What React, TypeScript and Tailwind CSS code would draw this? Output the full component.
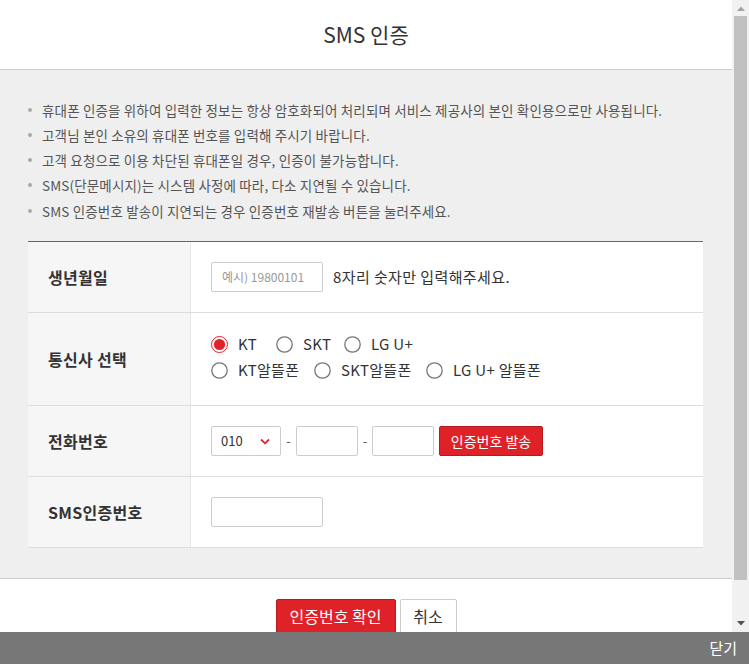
import React from "react";

function Radio({ checked, label, w }: { checked?: boolean; label: string; w: string }) {
  return (
    <label className={`flex items-center ${w}`}>
      <svg width="17" height="17" viewBox="0 0 17 17" className="shrink-0">
        {checked ? (
          <>
            <circle cx="8.5" cy="8.5" r="8" fill="#fff" stroke="#e0232a" strokeWidth="1" />
            <circle cx="8.5" cy="8.5" r="5.6" fill="#e0232a" />
          </>
        ) : (
          <circle cx="8.5" cy="8.5" r="7.7" fill="#fff" stroke="#767676" strokeWidth="1.3" />
        )}
      </svg>
      <span className="ml-[10px] text-[15px] leading-[20px] tracking-[0.3px] text-[#333] whitespace-nowrap">{label}</span>
    </label>
  );
}

function Row({ label, h, children }: { label: string; h: string; children: React.ReactNode }) {
  return (
    <div className={`flex border-b border-[#dddddd] ${h}`}>
      <div className="w-[163px] shrink-0 bg-[#f6f6f6] border-r border-[#e6e6e6] pl-[20px] flex items-center text-[16px] tracking-[0.3px] font-bold text-[#333]">
        {label}
      </div>
      <div className="flex-1 bg-white pl-[20px] flex items-center">{children}</div>
    </div>
  );
}

const bullets = [
  "휴대폰 인증을 위하여 입력한 정보는 항상 암호화되어 처리되며 서비스 제공사의 본인 확인용으로만 사용됩니다.",
  "고객님 본인 소유의 휴대폰 번호를 입력해 주시기 바랍니다.",
  "고객 요청으로 이용 차단된 휴대폰일 경우, 인증이 불가능합니다.",
  "SMS(단문메시지)는 시스템 사정에 따라, 다소 지연될 수 있습니다.",
  "SMS 인증번호 발송이 지연되는 경우 인증번호 재발송 버튼을 눌러주세요.",
];

export default function App() {
  return (
    <div className="w-[749px] h-[664px] flex flex-col overflow-hidden bg-white font-['Noto_Sans_CJK_KR',sans-serif]">
      <div className="flex h-[632px]">
        <div className="w-[732px] flex flex-col overflow-hidden">
          <div className="h-[70px] shrink-0 border-b border-[#cccccc] flex items-center justify-center text-[21px] text-[#333]">
            SMS 인증
          </div>
          <div className="bg-[#efefef] pt-[27px] pb-[30px] border-b border-[#cccccc] shrink-0">
            <ul className="h-[126px] pl-[28px]">
              {bullets.map((b) => (
                <li key={b} className="flex items-center h-[25.25px]">
                  <span className="w-[4px] h-[4px] rounded-full bg-[#a9a9a9] shrink-0" />
                  <span className="ml-[10px] text-[13.5px] text-[#555] tracking-[0.15px] whitespace-nowrap">{b}</span>
                </li>
              ))}
            </ul>
            <div className="mt-[18px] mx-[28px] w-[675px] border-t border-[#666]">
              <Row label="생년월일" h="h-[71px]">
                <div className="w-[112px] h-[30px] border border-[#ccc] rounded-[2px] flex items-center pl-[10px] text-[12px] text-[#999]">
                  예시) 19800101
                </div>
                <span className="ml-[10px] text-[15px] tracking-[0.4px] text-[#333]">8자리 숫자만 입력해주세요.</span>
              </Row>
              <Row label="통신사 선택" h="h-[93px]">
                <div className="flex flex-col gap-[6px] pb-[4px]">
                  <div className="flex">
                    <Radio checked label="KT" w="w-[65px]" />
                    <Radio label="SKT" w="w-[68px]" />
                    <Radio label="LG U+" w="w-[100px]" />
                  </div>
                  <div className="flex">
                    <Radio label="KT알뜰폰" w="w-[103px]" />
                    <Radio label="SKT알뜰폰" w="w-[112px]" />
                    <Radio label="LG U+ 알뜰폰" w="w-[130px]" />
                  </div>
                </div>
              </Row>
              <Row label="전화번호" h="h-[71px]">
                <div className="w-[70px] h-[30px] border border-[#ccc] rounded-[2px] flex items-center justify-between pl-[9px] pr-[10px] text-[13px] text-[#333]">
                  <span>010</span>
                  <svg width="10" height="7" viewBox="0 0 10 7">
                    <path d="M1 1.5 L5 5.3 L9 1.5" fill="none" stroke="#e0232a" strokeWidth="1.8" />
                  </svg>
                </div>
                <span className="w-[15px] text-center text-[13px] text-[#555]">-</span>
                <div className="w-[62px] h-[30px] border border-[#ccc] rounded-[2px]" />
                <span className="w-[14px] text-center text-[13px] text-[#555]">-</span>
                <div className="w-[62px] h-[30px] border border-[#ccc] rounded-[2px]" />
                <button className="ml-[5px] w-[104px] h-[30px] bg-[#df2128] border border-[#b51a20] rounded-[2px] text-white text-[14px] flex items-center justify-center">
                  인증번호 발송
                </button>
              </Row>
              <Row label="SMS인증번호" h="h-[71px]">
                <div className="w-[112px] h-[30px] border border-[#ccc] rounded-[2px]" />
              </Row>
            </div>
          </div>
          <div className="flex justify-center gap-[4px] pt-[20px]">
            <button className="w-[120px] h-[36px] shrink-0 bg-[#df2128] border border-[#b51a20] rounded-[2px] text-white text-[16px] flex items-start justify-center pt-[4px]">
              인증번호 확인
            </button>
            <button className="w-[57px] h-[36px] shrink-0 bg-white border border-[#ccc] rounded-[2px] text-[#333] text-[16px] flex items-start justify-center pt-[4px]">
              취소
            </button>
          </div>
        </div>
        <div className="w-[17px] bg-[#f1f1f1] flex flex-col items-center">
          <div className="h-[16px] w-full flex items-center justify-center">
            <svg width="8" height="5" viewBox="0 0 8 5">
              <path d="M0 5 L4 0.5 L8 5 Z" fill="#a3a3a3" />
            </svg>
          </div>
          <div className="w-[13px] h-[564px] bg-[#c1c1c1]" />
          <div className="flex-1" />
          <div className="h-[17px] w-full flex items-center justify-center">
            <svg width="8" height="5" viewBox="0 0 8 5">
              <path d="M0 0 L8 0 L4 4.5 Z" fill="#505050" />
            </svg>
          </div>
        </div>
      </div>
      <div className="h-[32px] bg-[#777777] flex items-center justify-end pr-[12px] text-white text-[15px]">
        닫기
      </div>
    </div>
  );
}
